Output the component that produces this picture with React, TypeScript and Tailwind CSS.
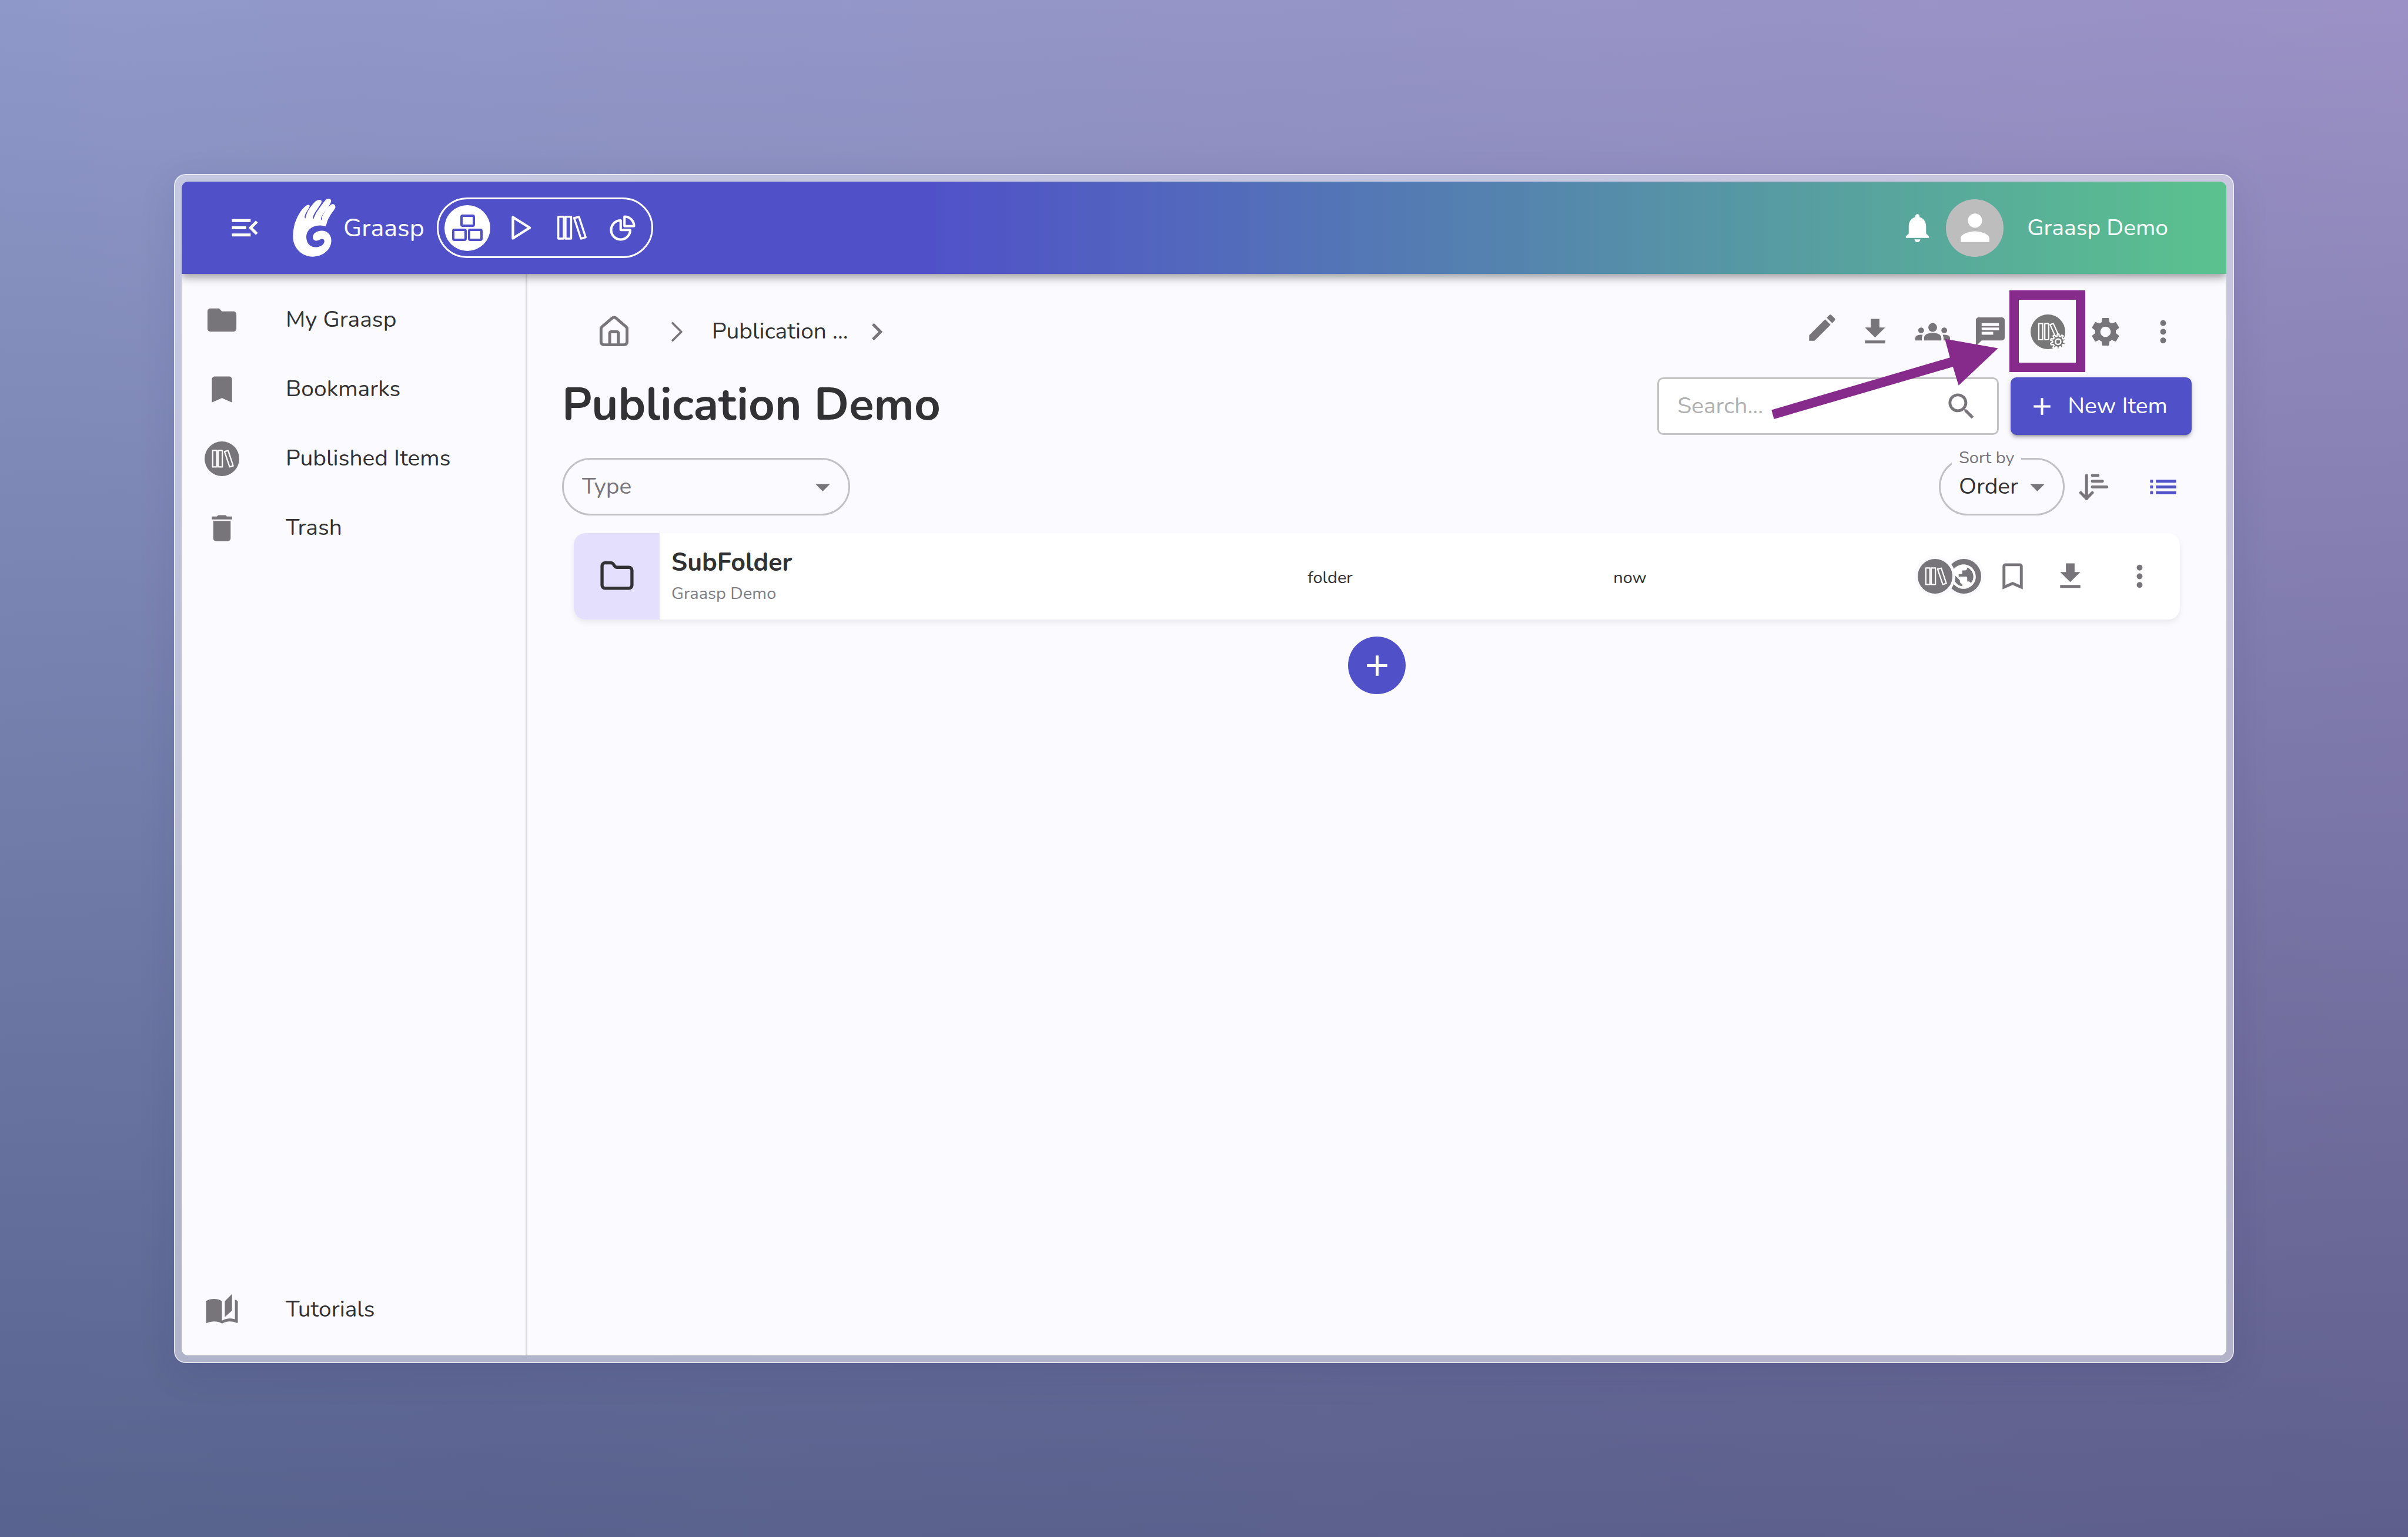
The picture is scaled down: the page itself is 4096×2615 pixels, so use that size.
import type { ReactNode } from "react";
import { ChevronRight, Folder, House, ArrowDownNarrowWide } from "lucide-react";
import {
  MdAdd,
  MdArrowDropDown,
  MdAutoStories,
  MdBookmark,
  MdBookmarkBorder,
  MdChat,
  MdChevronRight,
  MdDelete,
  MdEdit,
  MdFolder,
  MdGetApp,
  MdGroups,
  MdList,
  MdMenuOpen,
  MdMoreVert,
  MdNotifications,
  MdPerson,
  MdPublic,
  MdSearch,
  MdSettings,
} from "react-icons/md";

const ICON = "size-[59px] shrink-0";

function HandLogo() {
  return (
    <svg viewBox="57 60 270 368" className="h-[99px] w-[73px] shrink-0" aria-hidden="true">
      <path
        fill="#fff"
        d="M163 108 C165 98 152 96 142 104 C112 124 84 170 68 220 C58 262 55 300 60 325 C70 385 125 427 180 427
           C250 427 300 380 300 325 C300 290 275 263 240 263 C205 263 183 283 183 304 C183 318 194 326 207 326
           C222 326 228 315 242 315 C252 315 258 324 256 333 C252 352 228 367 200 367 C165 367 142 338 142 304
           C142 258 180 230 228 229 C245 229 252 234 264 234 C272 222 272 200 287 177 C297 155 316 138 325 118
           C330 100 312 88 298 98 C276 115 258 142 245 165 C240 176 243 188 238 196 C233 192 234 184 238 176
           C248 150 270 128 285 106 C294 90 303 78 297 67 C290 58 275 58 264 68 C246 88 228 115 212 138
           C198 158 194 172 188 188 C182 186 183 178 186 170 C194 148 216 120 230 98 C238 86 243 76 235 70
           C226 64 208 68 196 80 C176 100 160 122 149 144 C142 160 140 172 136 185 C130 182 131 174 134 164
           C140 144 158 124 163 108 Z"
      />
    </svg>
  );
}

function Cubes() {
  return (
    <svg viewBox="0 0 52 45" className="h-[45px] w-[52px]" fill="none" stroke="#5050c9" strokeWidth="4" aria-hidden="true">
      <rect x="16" y="2" width="21" height="17" rx="2" />
      <rect x="2" y="26" width="21" height="17" rx="2" />
      <rect x="29" y="26" width="21" height="17" rx="2" />
    </svg>
  );
}

function PlayOutline() {
  return (
    <svg viewBox="0 0 34 43" className="h-[43px] w-[34px]" fill="none" stroke="#fff" strokeWidth="4.4" strokeLinejoin="round" aria-hidden="true">
      <path d="M2.5 3.5 31 21.5 2.5 39.5Z" />
    </svg>
  );
}

function BookShapes() {
  return (
    <>
      <path d="M1.7 1.7H11V39H1.7Z" />
      <path d="M14 1.7H23.5V39H14Z" />
      <path d="M28.5 3.8 36.8 2 48.2 36.6 40.2 39Z" />
    </>
  );
}

function Books() {
  return (
    <svg viewBox="0 0 50 41" className="h-[41px] w-[50px]" fill="none" stroke="#fff" strokeWidth="3.4" strokeLinejoin="round" aria-hidden="true">
      <BookShapes />
    </svg>
  );
}

function Pie() {
  return (
    <svg viewBox="0 0 24 24" className="size-[52px]" fill="none" stroke="#fff" strokeWidth="1.9" strokeLinejoin="round" aria-hidden="true">
      <path d="M10.5 6a7.5 7.5 0 1 0 7.5 7.5h-7.5V6Z" />
      <path d="M13.5 10.5H21A7.5 7.5 0 0 0 13.5 3v7.5Z" />
    </svg>
  );
}

function LibraryDisc() {
  return (
    <svg viewBox="0 0 59 59" className={ICON} aria-hidden="true">
      <circle cx="29.5" cy="29.5" r="29.5" fill="#777579" />
      <g transform="translate(12.5 14.2) scale(.75)" fill="none" stroke="#fff" strokeWidth="3" strokeLinejoin="round">
        <BookShapes />
      </g>
    </svg>
  );
}

const GEAR = Array.from({ length: 10 }, (_, i) => {
  const at = (deg: number, r: number) => {
    const a = ((i * 36 + deg) * Math.PI) / 180;
    return `${(46.9 + r * Math.sin(a)).toFixed(2)} ${(46.4 + r * Math.cos(a)).toFixed(2)}`;
  };
  return `${at(-12, 9.4)} L${at(-6, 13)} L${at(6, 13)} L${at(12, 9.4)}`;
}).join(" L");

function LibrarySettingsDisc() {
  return (
    <svg viewBox="0 0 59 59" className={ICON} aria-hidden="true">
      <circle cx="29.5" cy="29.5" r="29.5" fill="#777777" />
      <g fill="none" stroke="#fff" strokeWidth="2.2" strokeLinejoin="round">
        <path d="M14 15.3H20.6V43H14Z" />
        <path d="M24.2 15.3H30.8V43H24.2Z" />
        <path d="M33.2 17.4 38.6 15.4 48 36 42.5 38.5Z" />
      </g>
      <path d={`M${GEAR} Z`} fill="#777777" stroke="#fff" strokeWidth="2.2" strokeLinejoin="round" />
      <circle cx="46.9" cy="46.4" r="4.6" fill="none" stroke="#fff" strokeWidth="2.4" />
    </svg>
  );
}

function IconButton({ label, className = "", children }: { label: string; className?: string; children: ReactNode }) {
  return (
    <button type="button" aria-label={label} className={`relative flex size-[98px] shrink-0 items-center justify-center text-[#777579] ${className}`}>
      {children}
    </button>
  );
}

function NavItem({ icon, label }: { icon: ReactNode; label: string }) {
  return (
    <li>
      <a href="#" className="flex h-[118px] items-center gap-[79px] pl-[39px]">
        <span className="text-[#777579]">{icon}</span>
        {label}
      </a>
    </li>
  );
}

function Header() {
  const modes = [
    { label: "Builder", icon: <Cubes />, style: "bg-white" },
    { label: "Player", icon: <PlayOutline />, style: "pl-[8px]" },
    { label: "Library", icon: <Books />, style: "pl-[4px]" },
    { label: "Analytics", icon: <Pie />, style: "" },
  ];
  return (
    <header className="relative z-10 flex h-[157px] shrink-0 items-center bg-[linear-gradient(90deg,#5050c9_0%,#5050c9_36%,#5ac28e_100%)] pr-[99px] pl-[78px] text-white shadow-[0_5px_10px_-2px_rgba(0,0,0,0.2),0_10px_12px_0_rgba(0,0,0,0.14),0_2px_24px_0_rgba(0,0,0,0.12)]">
      <button type="button" aria-label="Collapse menu">
        <MdMenuOpen className={ICON} />
      </button>
      <a href="#" className="ml-[52px] flex items-center gap-[13px] text-[43px]">
        <HandLogo />
        Graasp
      </a>
      <nav aria-label="Applications" className="ml-[21px] flex h-[103px] items-center gap-[10px] rounded-full border-[3px] border-white px-[10px]">
        {modes.map((m) => (
          <button key={m.label} type="button" aria-label={m.label} className={`flex size-[78px] items-center justify-center rounded-full ${m.style}`}>
            {m.icon}
          </button>
        ))}
      </nav>
      <button type="button" aria-label="Notifications" className="ml-auto">
        <MdNotifications className={ICON} />
      </button>
      <button type="button" className="ml-[19px] flex items-center gap-[40px]">
        <span className="flex size-[98px] items-center justify-center rounded-full bg-[#bdbdbd]">
          <MdPerson className="size-[73px]" />
        </span>
        Graasp Demo
      </button>
    </header>
  );
}

function Sidebar() {
  return (
    <nav aria-label="Main" className="flex w-[588px] shrink-0 flex-col justify-between border-r-[3px] border-[#dcdce0] py-[19px]">
      <ul>
        <NavItem icon={<MdFolder className={ICON} />} label="My Graasp" />
        <NavItem icon={<MdBookmark className={ICON} />} label="Bookmarks" />
        <NavItem icon={<LibraryDisc />} label="Published Items" />
        <NavItem icon={<MdDelete className={ICON} />} label="Trash" />
      </ul>
      <ul>
        <NavItem icon={<MdAutoStories className={ICON} />} label="Tutorials" />
      </ul>
    </nav>
  );
}

function Toolbar() {
  return (
    <div className="flex h-[98px] items-center justify-between">
      <nav aria-label="Breadcrumb" className="flex items-center pl-[59px] text-[#777579]">
        <a href="#" aria-label="Home">
          <House className={ICON} strokeWidth={2} />
        </a>
        <ChevronRight className={`${ICON} ml-[48px]`} strokeWidth={1.5} />
        <a href="#" className="ml-[30px] text-[#323235]">
          Publication ...
        </a>
        <MdChevronRight className={`${ICON} ml-[19px]`} />
      </nav>
      <div className="flex items-center">
        <button type="button" aria-label="Edit" className="flex h-[84px] w-[82px] items-center justify-center self-start text-[#777579]">
          <MdEdit className={ICON} />
        </button>
        <IconButton label="Download">
          <MdGetApp className={ICON} />
        </IconButton>
        <IconButton label="Share">
          <MdGroups className={ICON} />
        </IconButton>
        <IconButton label="Chat">
          <MdChat className={ICON} />
        </IconButton>
        <IconButton label="Publish">
          <LibrarySettingsDisc />
          <span className="pointer-events-none absolute -top-[21px] -right-[15px] -bottom-[20px] -left-[16px] border-[16px] border-[#862b8b]" />
        </IconButton>
        <IconButton label="Settings">
          <MdSettings className={ICON} />
        </IconButton>
        <IconButton label="More">
          <MdMoreVert className={ICON} />
        </IconButton>
      </div>
    </div>
  );
}

function TitleRow() {
  return (
    <div className="mt-[29px] flex items-center justify-between">
      <h1 className="-mt-[4px] text-[78px] leading-[98px] font-bold">Publication Demo</h1>
      <div className="flex gap-[20px]">
        <div className="relative flex h-[98px] w-[581px] items-center rounded-[10px] border-[3px] border-[#c4c4c5] bg-white pr-[31px] pl-[31px]">
          <input type="text" aria-label="Search" placeholder="Search..." className="min-w-0 flex-1 bg-transparent outline-none placeholder:text-[#b0b0b1]" />
          <MdSearch className={`${ICON} text-[#777579]`} />
          <svg viewBox="3013 576 386 138" className="pointer-events-none absolute -top-[69px] -right-[2px] z-10 h-[138px] w-[386px]" aria-hidden="true">
            <path fill="#862b8b" d="M3013.3 697.4 3316.8 608.3 3308.2 576.6 3398.7 592.5 3331.6 655.8 3321.9 624.1 3017.6 713Z" />
          </svg>
        </div>
        <button type="button" className="flex h-[98px] items-center gap-[19px] rounded-[10px] bg-[#5050c9] pr-[41px] pl-[29px] text-white shadow-[0_7px_3px_-5px_rgba(0,0,0,0.2),0_5px_5px_0_rgba(0,0,0,0.14),0_2px_12px_0_rgba(0,0,0,0.12)]">
          <MdAdd className="size-[49px]" />
          New Item
        </button>
      </div>
    </div>
  );
}

function Filters() {
  return (
    <div className="mt-[39px] flex items-center justify-between">
      <div className="relative">
        <select aria-label="Type" className="h-[98px] w-[490px] appearance-none rounded-full border-[3px] border-[#c1c1c4] bg-transparent pl-[31px] text-[#777579]">
          <option>Type</option>
        </select>
        <MdArrowDropDown className={`${ICON} pointer-events-none absolute top-[20px] right-[17px] text-[#777579]`} />
      </div>
      <div className="flex items-center">
        <div className="relative">
          <select id="sort" className="h-[98px] w-[214px] appearance-none rounded-full border-[3px] border-[#c1c1c4] bg-transparent pl-[31px]">
            <option>Order</option>
          </select>
          <label htmlFor="sort" className="absolute -top-[18px] left-[22px] bg-[#fbfaff] px-[12px] text-[29px] leading-[36px] text-[#777579]">
            Sort by
          </label>
          <MdArrowDropDown className={`${ICON} pointer-events-none absolute top-[20px] right-[17px] text-[#777579]`} />
        </div>
        <IconButton label="Sort direction">
          <ArrowDownNarrowWide className={ICON} strokeWidth={2} />
        </IconButton>
        <button type="button" aria-label="List view" className="ml-[20px] flex size-[98px] items-center justify-center text-[#5050c9]">
          <MdList className={ICON} />
        </button>
      </div>
    </div>
  );
}

function ItemCard() {
  return (
    <article className="mx-[20px] mt-[30px] flex h-[147px] overflow-hidden rounded-[20px] bg-white shadow-[0_5px_10px_0_rgba(0,0,0,0.07)]">
      <div className="flex w-[146px] shrink-0 items-center justify-center bg-[#e3dffc]">
        <Folder className="size-[61px]" strokeWidth={2.1} />
      </div>
      <div className="grid flex-1 grid-cols-[885fr_510fr_510fr_661fr] items-center pr-[19px] text-[29px]">
        <div className="pl-[20px]">
          <h2 className="text-[43px] leading-[58px] font-bold">SubFolder</h2>
          <p className="leading-[48px] text-[#807e84]">Graasp Demo</p>
        </div>
        <span className="pt-[4px] text-center">folder</span>
        <span className="pt-[4px] text-center">now</span>
        <div className="flex items-center justify-end">
          <span className="relative z-10 -mr-[20px] rounded-full border-[5px] border-[#fbfaff]">
            <LibraryDisc />
          </span>
          <span className="rounded-full border-[5px] border-[#fbfaff]">
            <span className="flex size-[59px] items-center justify-center rounded-full bg-[#777579] text-white">
              <MdPublic className="size-[50px]" />
            </span>
          </span>
          <IconButton label="Bookmark">
            <MdBookmarkBorder className={ICON} />
          </IconButton>
          <IconButton label="Download">
            <MdGetApp className={ICON} />
          </IconButton>
          <IconButton label="More" className="ml-[20px]">
            <MdMoreVert className={ICON} />
          </IconButton>
        </div>
      </div>
    </article>
  );
}

export default function App() {
  return (
    <div className="flex min-h-screen bg-[linear-gradient(180deg,rgba(10,24,60,0),rgba(10,24,60,0.42)),linear-gradient(90deg,#8f99c9,#9b91c6)] p-[296px] font-['Nunito','Nunito_Sans','Lato',sans-serif] text-[39px] leading-[54px] text-[#323235]">
      <div className="flex flex-1 rounded-[20px] border-2 border-white/80 bg-white/50 bg-clip-padding p-[11px] shadow-[0_16px_64px_0_rgba(30,30,80,0.1)]">
        <div className="flex flex-1 flex-col overflow-hidden rounded-[11px] bg-[#fbfaff]">
          <Header />
          <div className="flex flex-1">
            <Sidebar />
            <main className="flex-1 px-[59px] pt-[49px]">
              <Toolbar />
              <TitleRow />
              <Filters />
              <ItemCard />
              <div className="mt-[29px] flex justify-center">
                <button type="button" aria-label="Add item" className="flex size-[98px] items-center justify-center rounded-full bg-[#5050c9] text-white">
                  <MdAdd className={ICON} />
                </button>
              </div>
            </main>
          </div>
        </div>
      </div>
    </div>
  );
}
